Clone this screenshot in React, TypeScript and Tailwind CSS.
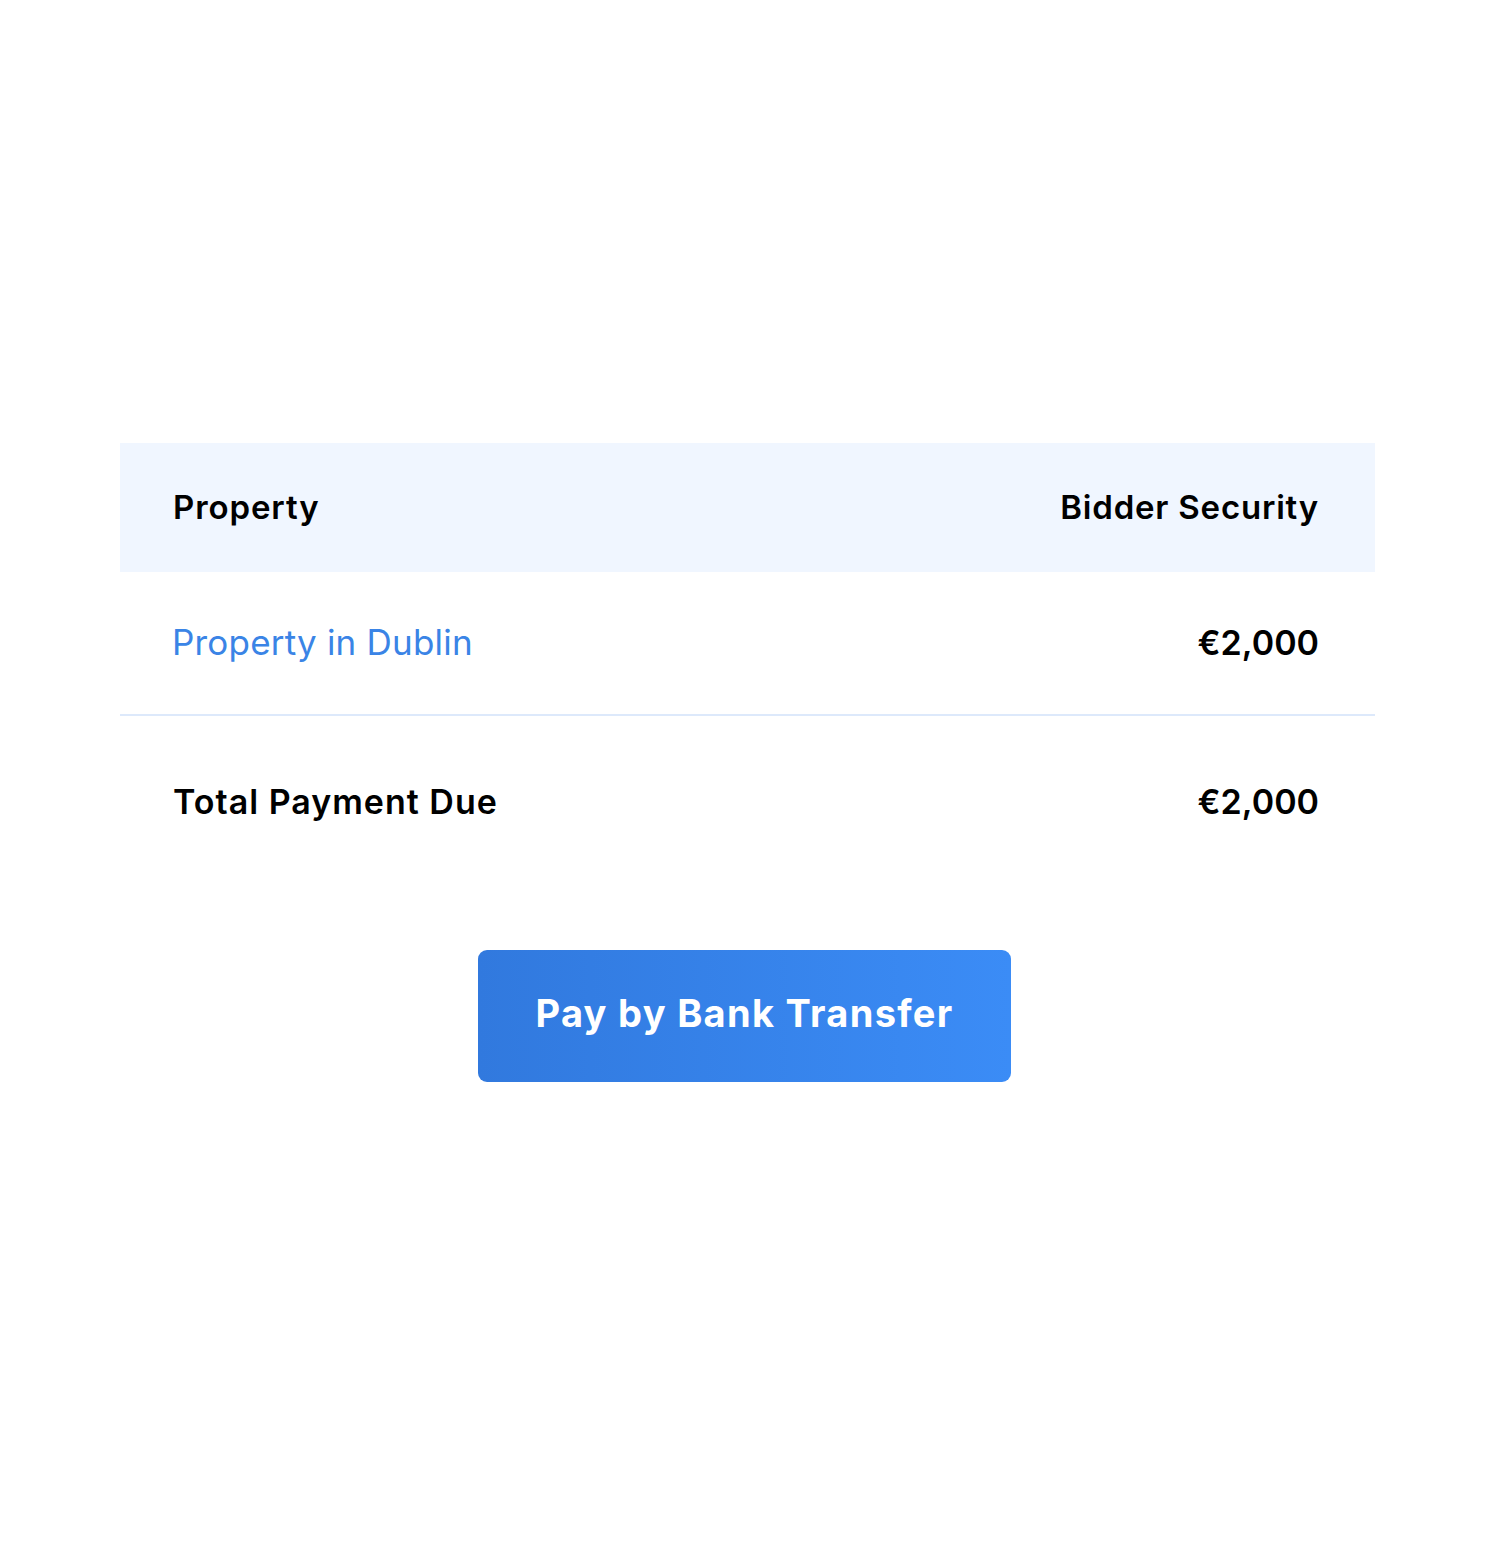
export default function App() {
  return (
    <div className="min-h-[1567px] w-full bg-white font-['Inter',sans-serif] text-black">
      <div className="pt-[443px]">
        <div className="ml-[120px] w-[1255px]">
          <div className="flex h-[129px] items-center justify-between bg-[#f0f6ff] pl-[53px] pr-[56px]">
            <span className="text-[33px] font-semibold tracking-[0.9px]">Property</span>
            <span className="text-[33px] font-semibold tracking-[0.8px]">Bidder Security</span>
          </div>
          <div className="flex h-[144px] items-center justify-between border-b-2 border-[#dde9fb] pl-[52px] pr-[56px] pb-[2px]">
            <span className="text-[35px] font-normal text-[#3a84e6] tracking-[0.2px]">Property in Dublin</span>
            <span className="text-[34px] font-semibold tracking-[0px]">€2,000</span>
          </div>
          <div className="flex h-[170px] items-center justify-between pl-[53px] pr-[56px]">
            <span className="text-[34px] font-semibold tracking-[1px]">Total Payment Due</span>
            <span className="text-[34px] font-semibold tracking-[0px]">€2,000</span>
          </div>
        </div>
        <div className="mt-[64px] flex justify-center pl-[3px]">
          <button className="flex h-[132px] w-[533px] items-center justify-center rounded-[9px] bg-gradient-to-r from-[#3179de] to-[#3b8cf6] pb-[5px] text-[38px] font-bold tracking-[1.3px] text-white">
            Pay by Bank Transfer
          </button>
        </div>
      </div>
    </div>
  );
}
